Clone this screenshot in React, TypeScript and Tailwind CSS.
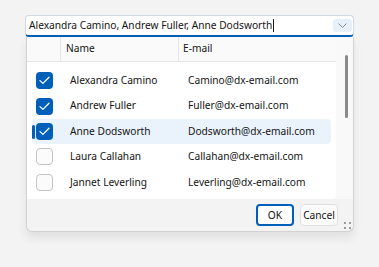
import React from "react"

interface Employee {
  name: string
  email: string
  checked: boolean
  focused?: boolean
}

const employees: Employee[] = [
  { name: "Alexandra Camino", email: "Camino@dx-email.com", checked: true },
  { name: "Andrew Fuller", email: "Fuller@dx-email.com", checked: true },
  { name: "Anne Dodsworth", email: "Dodsworth@dx-email.com", checked: true, focused: true },
  { name: "Laura Callahan", email: "Callahan@dx-email.com", checked: false },
  { name: "Jannet Leverling", email: "Leverling@dx-email.com", checked: false },
]

function CheckBox({ checked }: { checked: boolean }) {
  if (!checked) {
    return <div className="w-[17px] h-[17px] rounded-[4px] border border-[#c4c4c4] bg-[#fbfbfb]" />
  }
  return (
    <div className="w-[17px] h-[17px] rounded-[4px] bg-[#005fb8] flex items-center justify-center">
      <svg width="11" height="9" viewBox="0 0 11 9" fill="none">
        <path d="M1 4.6 L3.9 7.4 L10 1.3" stroke="white" strokeWidth="1.3" strokeLinecap="round" strokeLinejoin="round" />
      </svg>
    </div>
  )
}

export default function App() {
  return (
    <div
      className="w-[379px] h-[267px] bg-[#f3f3f3] pt-[15px] pl-[25px] text-[10.2px] text-[#141414] whitespace-nowrap"
      style={{ fontFamily: '"Segoe UI", "Noto Sans", sans-serif' }}
    >
      <div className="w-[329px]">
        {/* editor */}
        <div className="h-[22px] bg-white border border-[#cfd8e3] border-b-2 border-b-[#005fb8] rounded-[4px] flex items-center pl-[3px] pr-[1px]">
          <div className="flex-1 flex items-center leading-none">
            <span>Alexandra Camino, Andrew Fuller, Anne Dodsworth</span>
            <span className="w-px h-[13px] bg-[#1b1b1b] ml-[1px]" />
          </div>
          <div className="w-[19px] h-[13px] rounded-[3px] bg-[#e6f1fb] flex items-center justify-center">
            <svg width="9" height="5" viewBox="0 0 9 5" fill="none">
              <path d="M0.5 0.5 L4.5 4.5 L8.5 0.5" stroke="#8a8a8a" strokeWidth="1" />
            </svg>
          </div>
        </div>

        {/* popup */}
        <div className="ml-px h-[195px] border border-t-0 border-[#d2d2d2] rounded-b-[6px] bg-[#f3f3f3] shadow-[0_6px_10px_rgba(0,0,0,0.08)] flex flex-col overflow-hidden">
          <div className="flex h-[162px] bg-[#f9f9f9]">
            <div className="w-[309px] flex flex-col bg-white rounded-br-[4px]">
              <div className="flex h-[25px] bg-[#fafafa] border-b border-[#e6e6e6]">
                <div className="w-[34px] border-r border-[#e6e6e6]" />
                <div className="w-[118px] border-r border-[#e6e6e6] flex items-center pl-[5px]">Name</div>
                <div className="flex-1 flex items-center pl-[4px]">E-mail</div>
              </div>
              <div className="pt-[6px] px-[5px] flex flex-col">
                {employees.map((e) => (
                  <div
                    key={e.name}
                    className={`relative flex items-center h-[25.4px] rounded-[4px] ${e.focused ? "bg-[#eaf3fc]" : ""}`}
                  >
                    {e.focused && (
                      <div className="absolute left-0 top-[6px] w-[3px] h-[14px] rounded-full bg-[#005fb8]" />
                    )}
                    <div className="w-[38px] pl-[4px]">
                      <CheckBox checked={e.checked} />
                    </div>
                    <div className="w-[118px]">{e.name}</div>
                    <div className="flex-1">{e.email}</div>
                  </div>
                ))}
              </div>
            </div>
            <div className="flex-1 relative">
              <div className="absolute left-[9px] top-[18px] w-[3px] h-[63px] rounded-full bg-[#8a8a8a]" />
            </div>
          </div>
          <div className="flex-1 flex items-start justify-end gap-[6px] pt-[5px] pr-[15px] relative">
            <button className="h-[22px] w-[38px] rounded-[4px] border-2 border-[#005fb8] bg-white leading-none">OK</button>
            <button className="h-[22px] w-[38px] rounded-[4px] border border-[#e0e0e0] bg-[#fbfbfb] leading-none">Cancel</button>
            <svg className="absolute right-[2px] bottom-[2px]" width="7" height="7" viewBox="0 0 7 7">
              <rect x="0" y="0" width="2" height="2" fill="#9a9a9a" />
              <rect x="5" y="0" width="2" height="2" fill="#9a9a9a" />
              <rect x="0" y="5" width="2" height="2" fill="#9a9a9a" />
              <rect x="5" y="5" width="2" height="2" fill="#9a9a9a" />
            </svg>
          </div>
        </div>
      </div>
    </div>
  )
}
